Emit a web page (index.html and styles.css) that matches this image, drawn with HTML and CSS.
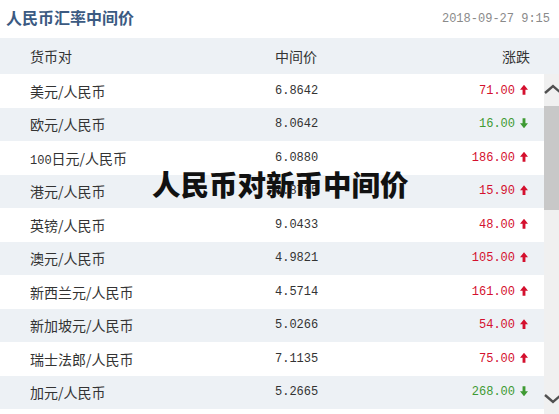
FILE: index.html
```html
<!DOCTYPE html>
<html>
	<head>
		<meta charset="utf-8" />
		<title>人民币汇率中间价</title>
		<link rel="stylesheet" href="styles.css">
	</head>
	<body>
		<article class="page">
			<header class="top">
				<h1>人民币汇率中间价</h1>
				<span class="date">2018-09-27 9:15</span>
			</header>
			<div class="row thead">
				<span>货币对</span>
				<span>中间价</span>
				<span class="chg">涨跌</span>
			</div>
			<section class="body">
				<ul class="rows">
					<li class="row"><span>美元/人民币</span><span class="num">6.8642</span><span class="chg up">71.00<i></i></span></li>
					<li class="row"><span>欧元/人民币</span><span class="num">8.0642</span><span class="chg down">16.00<i></i></span></li>
					<li class="row"><span><b class="num">100</b>日元/人民币</span><span class="num">6.0880</span><span class="chg up">186.00<i></i></span></li>
					<li class="row"><span>港元/人民币</span><span class="num">0.8795</span><span class="chg up">15.90<i></i></span></li>
					<li class="row"><span>英镑/人民币</span><span class="num">9.0433</span><span class="chg up">48.00<i></i></span></li>
					<li class="row"><span>澳元/人民币</span><span class="num">4.9821</span><span class="chg up">105.00<i></i></span></li>
					<li class="row"><span>新西兰元/人民币</span><span class="num">4.5714</span><span class="chg up">161.00<i></i></span></li>
					<li class="row"><span>新加坡元/人民币</span><span class="num">5.0266</span><span class="chg up">54.00<i></i></span></li>
					<li class="row"><span>瑞士法郎/人民币</span><span class="num">7.1135</span><span class="chg up">75.00<i></i></span></li>
					<li class="row"><span>加元/人民币</span><span class="num">5.2665</span><span class="chg down">268.00<i></i></span></li>
				</ul>
				<div class="scrollbar">
					<svg class="arrow" width="16" height="14" viewBox="0 0 16 14"><path d="M1 10 L9 3 L17 10" fill="none" stroke="#505050" stroke-width="2.4"/></svg>
					<div class="thumb"></div>
					<div class="track"></div>
					<svg class="arrow" width="16" height="14" viewBox="0 0 16 14"><path d="M1 4 L9 11 L17 4" fill="none" stroke="#505050" stroke-width="2.4"/></svg>
				</div>
			</section>
			<div class="overlay">人民币对新币中间价</div>
		</article>
	</body>
</html>
```
FILE: styles.css
```css
*{margin: 0;padding: 0;}
body{
	font-family: "Noto Sans CJK SC", sans-serif;
	font-size: 14px;
	color: #333;
	background: #fff;
	overflow: hidden;
}
li{
	list-style: none;
}
.page{
	position: relative;
	width: 559px;
	height: 414px;
}
.top{
	height: 38px;
	display: flex;
	align-items: center;
	justify-content: space-between;
	padding: 0 9px 0 6px;
}
.top h1{
	font-size: 16px;
	font-weight: bold;
	color: #3b5a82;
	margin-top: -4px;
}
.date{
	font-family: "Liberation Mono", monospace;
	font-size: 12px;
	color: #8a8a8a;
}
.row{
	display: grid;
	grid-template-columns: 245px 1fr 120px;
	align-items: center;
	height: 33.5px;
	padding: 0 16px 0 30px;
}
.thead{
	height: 36px;
	background: #edf1f5;
	padding-right: 29px;
}
.chg{
	text-align: right;
}
.body{
	display: flex;
	height: 340px;
}
.rows{
	width: 544px;
}
.rows .row:nth-child(even){
	background: #edf1f5;
}
.num{
	font-family: "Liberation Mono", monospace;
	font-size: 12px;
	font-weight: normal;
}
.up, .down{
	font-family: "Liberation Mono", monospace;
	font-size: 12px;
}
.up{color: #d4102e;}
.down{color: #3e9a33;}
.chg i{
	display: inline-block;
	width: 8px;
	height: 10px;
	margin-left: 5px;
	vertical-align: -1px;
	background: currentColor;
	clip-path: polygon(50% 0, 100% 50%, 68% 50%, 68% 100%, 32% 100%, 32% 50%, 0 50%);
}
.down i{
	clip-path: polygon(32% 0, 68% 0, 68% 50%, 100% 50%, 50% 100%, 0 50%, 32% 50%);
}
.scrollbar{
	flex: 1;
	display: flex;
	flex-direction: column;
	background: #f0f0f0;
	overflow: hidden;
}
.arrow{
	display: block;
	height: 32px;
	padding: 9px 0;
	box-sizing: border-box;
}
.thumb{
	height: 104px;
	background: #c8c8c8;
}
.track{
	flex: 1;
}
.overlay{
	position: absolute;
	left: 152px;
	top: 163px;
	font-size: 28.5px;
	font-weight: 900;
	color: #111;
}
```
